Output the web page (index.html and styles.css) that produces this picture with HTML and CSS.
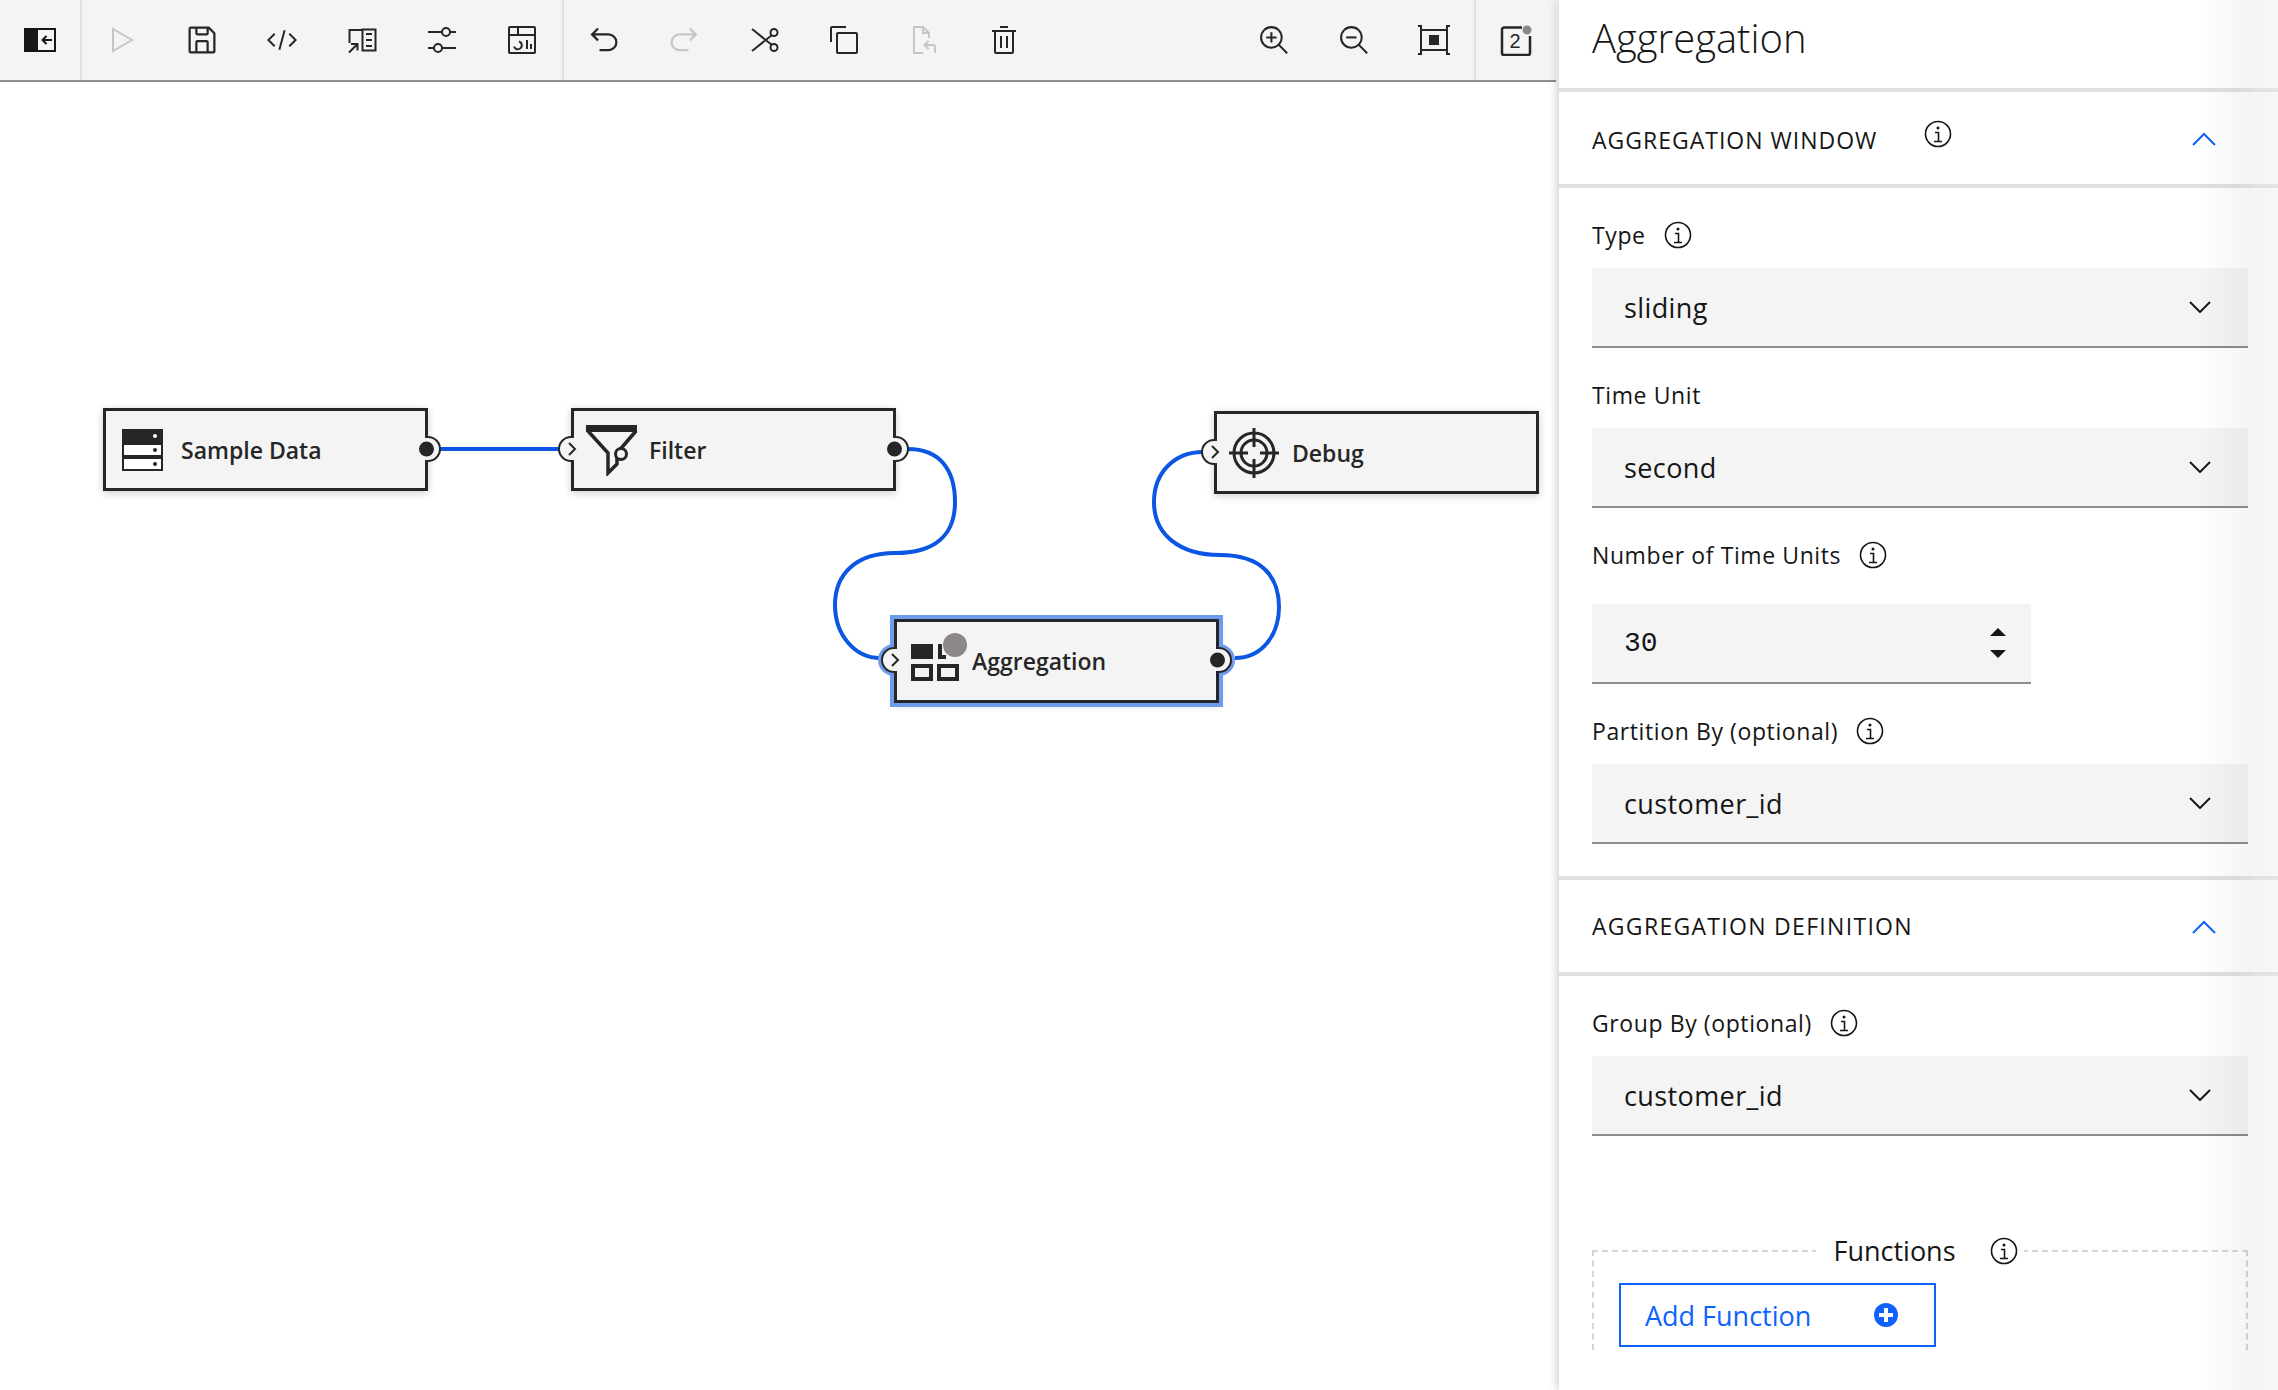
FILE: index.html
```html
<!DOCTYPE html>
<html>
	<head>
		<meta charset="utf-8" />
		<title>Aggregation</title>
		<link rel="stylesheet" href="styles.css">
	</head>

	<body>
		<main class="editor">
			<div class="toolbar">
				<div class="tool-group">
					<button class="tool">
						<svg class="icon-close" viewBox="0 0 32 24"><rect width="14" height="24" fill="#161616"/><rect x="13" y="1" width="18" height="22" fill="none" stroke="#161616" stroke-width="2"/><path d="M28 12h-9M22.500 8l-4 4 4 4" fill="none" stroke="#161616" stroke-width="2"/></svg>
					</button>
				</div>
				<div class="tool-group">
					<button class="tool is-disabled">
						<svg class="icon" viewBox="0 0 32 32"><path d="M7 5v22l19-11z" class="line"/></svg>
					</button>
					<button class="tool">
						<svg class="icon icon-lg" viewBox="0 0 32 32"><path d="M27.710 9.290l-5-5A1 1 0 0 0 22 4H6a2 2 0 0 0-2 2v20a2 2 0 0 0 2 2h20a2 2 0 0 0 2-2V10a1 1 0 0 0-.29-.71zM12 6h8v4h-8zm8 20h-8v-8h8zm2 0v-8a2 2 0 0 0-2-2h-8a2 2 0 0 0-2 2v8H6V6h4v4a2 2 0 0 0 2 2h8a2 2 0 0 0 2-2V6.410l4 4V26z"/></svg>
					</button>
					<button class="tool">
						<svg class="icon" viewBox="0 0 32 32"><path d="M31 16l-7 7-1.410-1.410L28.170 16l-5.580-5.590L24 9l7 7zM1 16l7-7 1.410 1.410L3.830 16l5.580 5.590L8 23l-7-7zM12.419 25.484L17.639 6l1.932.518L14.350 26z"/></svg>
					</button>
					<button class="tool">
						<svg class="icon" viewBox="0 0 32 32"><path class="line" d="M16.500 5.500h13v21h-13zM20 10h6M20 16h6M20 22h6M3.500 19V6H16.500M3 28.500l8-8M5 20h6.500v6.500"/></svg>
					</button>
					<button class="tool">
						<svg class="icon" viewBox="0 0 32 32"><path class="line" d="M2 8h14M24 8h6M2 24h6M16 24h14"/><circle class="line" cx="20" cy="8" r="4"/><circle class="line" cx="12" cy="24" r="4"/></svg>
					</button>
					<button class="tool">
						<svg class="icon" viewBox="0 0 32 32"><rect class="line" x="3" y="3" width="26" height="26" rx="1"/><path class="line" d="M3 11h26M12 3v8M21 16v9M25 20v5M13 17.500a4 4 0 1 1-5 5"/></svg>
					</button>
				</div>
				<div class="tool-group tool-group-plain">
					<button class="tool">
						<svg class="icon icon-lg" viewBox="0 0 32 32"><path d="M20 10H7.815l3.587-3.586L10 5l-6 6 6 6 1.402-1.415L7.818 12H20a6 6 0 0 1 0 12h-8v2h8a8 8 0 0 0 0-16z"/></svg>
					</button>
					<button class="tool is-disabled">
						<svg class="icon icon-lg" viewBox="0 0 32 32"><path transform="matrix(-1 0 0 1 32 0)" d="M20 10H7.815l3.587-3.586L10 5l-6 6 6 6 1.402-1.415L7.818 12H20a6 6 0 0 1 0 12h-8v2h8a8 8 0 0 0 0-16z"/></svg>
					</button>
					<button class="tool">
						<svg class="icon" viewBox="0 0 32 32"><path class="line" d="M4 5l20 16M4 27l20-16"/><circle class="line" cx="26" cy="8.500" r="3.500"/><circle class="line" cx="26" cy="23.500" r="3.500"/></svg>
					</button>
					<button class="tool">
						<svg class="icon" viewBox="0 0 32 32"><path d="M28 10v18H10V10h18m0-2H10a2 2 0 0 0-2 2v18a2 2 0 0 0 2 2h18a2 2 0 0 0 2-2V10a2 2 0 0 0-2-2z"/><path d="M4 18H2V4a2 2 0 0 1 2-2h14v2H4z"/></svg>
					</button>
					<button class="tool is-disabled">
						<svg class="icon" viewBox="0 0 32 32"><path class="line" d="M15 29H6V3h9l6 6v5M15 3v6h6M27 29v-6a2 2 0 0 0-2-2h-8M20.500 17l-4 4 4 4"/></svg>
					</button>
					<button class="tool">
						<svg class="icon" viewBox="0 0 32 32"><path d="M12 12h2v12h-2zM18 12h2v12h-2z"/><path d="M4 6v2h2v20a2 2 0 0 0 2 2h16a2 2 0 0 0 2-2V8h2V6zm4 22V8h16v20zM12 2h8v2h-8z"/></svg>
					</button>
				</div>
				<div class="tool-group tool-group-right">
					<button class="tool">
						<svg class="icon icon-zoom" viewBox="0 0 32 32"><path d="M18 12h-4V8h-2v4H8v2h4v4h2v-4h4v-2z"/><path d="M21.448 20A10.856 10.856 0 0 0 24 13a11 11 0 1 0-11 11 10.856 10.856 0 0 0 7-2.552L27.586 29 29 27.586zM13 22a9 9 0 1 1 9-9 9.010 9.010 0 0 1-9 9z"/></svg>
					</button>
					<button class="tool">
						<svg class="icon icon-zoom" viewBox="0 0 32 32"><path d="M8 12h10v2H8z"/><path d="M21.448 20A10.856 10.856 0 0 0 24 13a11 11 0 1 0-11 11 10.856 10.856 0 0 0 7-2.552L27.586 29 29 27.586zM13 22a9 9 0 1 1 9-9 9.010 9.010 0 0 1-9 9z"/></svg>
					</button>
					<button class="tool">
						<svg class="icon" viewBox="0 0 32 32"><rect class="line" x="3" y="6" width="26" height="20"/><rect x="11" y="11" width="10" height="10"/><path class="line" d="M3 5V2H0M29 5V2h3M3 27v3H0M29 27v3h3" stroke-width="1.500"/></svg>
					</button>
				</div>
				<div class="tool-group tool-group-plain">
					<button class="tool">
						<svg class="icon" viewBox="0 0 32 32"><path class="line line-thick" d="M22 3.500H4a2 2 0 0 0-2 2V29a2 2 0 0 0 2 2h24a2 2 0 0 0 2-2V12"/><text x="15" y="24" class="icon-count">2</text><circle cx="27" cy="6" r="4.500" fill="#8d8888"/></svg>
					</button>
				</div>
			</div>

			<div class="canvas">
				<svg class="wires" viewBox="0 82 1559 1308">
					<path d="M439 449H560"/>
					<path d="M908 449C940 449 955 470 955 502C955 535 935 553 895 553C855 553 835 575 835 605C835 635 855 658 880 658"/>
					<path d="M1235 658C1262 658 1279 635 1279 607C1279 575 1260 555 1220 555C1180 555 1154 535 1154 502C1154 472 1175 452 1203 452"/>
				</svg>

				<div class="node node-sample">
					<div class="node-icon">
						<svg width="41" height="42" viewBox="0 0 41 42"><rect width="41" height="14" fill="#262626"/><rect x="1" y="15" width="39" height="12" fill="#fff" stroke="#262626" stroke-width="2"/><rect x="1" y="29" width="39" height="12" fill="#fff" stroke="#262626" stroke-width="2"/><circle cx="33" cy="7" r="2" fill="#fff"/><circle cx="33" cy="21" r="2" fill="#262626"/><circle cx="33" cy="35" r="2" fill="#262626"/></svg>
					</div>
					<span class="node-label">Sample Data</span>
					<svg class="port port-out" viewBox="0 0 32 32"><rect x="10" y="5" width="6" height="22" fill="#f4f4f4"/><path d="M16 4a12 12 0 0 1 0 24" fill="#f4f4f4" stroke="#262626" stroke-width="2"/><circle cx="14.500" cy="16" r="7.500" fill="#262626"/></svg>
				</div>

				<div class="node node-filter">
					<div class="node-icon">
						<svg width="52" height="52" viewBox="0 0 52 52"><rect y="1" width="51" height="7" fill="#262626"/><path d="M2 7L22 29V49L31 40V29L50 7" fill="none" stroke="#262626" stroke-width="3.500"/><circle cx="35" cy="30" r="5.500" fill="#f4f4f4" stroke="#262626" stroke-width="3"/></svg>
					</div>
					<span class="node-label">Filter</span>
					<svg class="port port-in" viewBox="0 0 32 32"><rect x="16" y="5" width="6" height="22" fill="#f4f4f4"/><path d="M16 4a12 12 0 0 0 0 24" fill="#f4f4f4" stroke="#262626" stroke-width="2"/><path d="M14 10l6 6-6 6" fill="none" stroke="#262626" stroke-width="2"/></svg>
					<svg class="port port-out" viewBox="0 0 32 32"><rect x="10" y="5" width="6" height="22" fill="#f4f4f4"/><path d="M16 4a12 12 0 0 1 0 24" fill="#f4f4f4" stroke="#262626" stroke-width="2"/><circle cx="14.500" cy="16" r="7.500" fill="#262626"/></svg>
				</div>

				<div class="node node-debug">
					<div class="node-icon">
						<svg width="50" height="50" viewBox="0 0 50 50"><g fill="none" stroke="#262626" stroke-width="3"><circle cx="25" cy="25" r="20"/><circle cx="25" cy="25" r="13"/><path d="M0 25H19M31 25H50M25 0V19M25 31V50"/></g></svg>
					</div>
					<span class="node-label">Debug</span>
					<svg class="port port-in" viewBox="0 0 32 32"><rect x="16" y="5" width="6" height="22" fill="#f4f4f4"/><path d="M16 4a12 12 0 0 0 0 24" fill="#f4f4f4" stroke="#262626" stroke-width="2"/><path d="M14 10l6 6-6 6" fill="none" stroke="#262626" stroke-width="2"/></svg>
				</div>

				<div class="node node-aggregation">
					<div class="node-icon">
						<svg class="aggregation-icon" width="60" height="50" viewBox="0 0 60 50"><rect y="11" width="22" height="15" fill="#262626"/><path d="M29 11V24H35" fill="none" stroke="#262626" stroke-width="4"/><rect x="2" y="33" width="18" height="13" fill="none" stroke="#262626" stroke-width="4"/><rect x="28" y="33" width="18" height="13" fill="none" stroke="#262626" stroke-width="4"/><circle cx="44" cy="12" r="12" fill="#8d8888"/></svg>
					</div>
					<span class="node-label">Aggregation</span>
					<svg class="port port-in" viewBox="0 0 32 32"><path d="M16 2a14 14 0 0 0 0 28" fill="none" stroke="#6f9bef" stroke-width="4"/><rect x="16" y="5" width="6" height="22" fill="#f4f4f4"/><path d="M16 4a12 12 0 0 0 0 24" fill="#f4f4f4" stroke="#262626" stroke-width="2"/><path d="M14 10l6 6-6 6" fill="none" stroke="#262626" stroke-width="2"/></svg>
					<svg class="port port-out" viewBox="0 0 32 32"><path d="M16 2a14 14 0 0 1 0 28" fill="none" stroke="#6f9bef" stroke-width="4"/><rect x="10" y="5" width="6" height="22" fill="#f4f4f4"/><path d="M16 4a12 12 0 0 1 0 24" fill="#f4f4f4" stroke="#262626" stroke-width="2"/><circle cx="14.500" cy="16" r="7.500" fill="#262626"/></svg>
				</div>
			</div>
		</main>

		<aside class="panel">
			<h1 class="panel-title">Aggregation</h1>

			<section class="section">
				<header class="section-head">
					<h2 class="section-name">AGGREGATION WINDOW</h2>
					<svg class="info info-raised" viewBox="0 0 28 28"><circle cx="14" cy="14" r="12.500"/><path d="M11 12.500h3.500V21M10 21.500h8"/><circle class="info-dot" cx="14" cy="8" r="1.500"/></svg>
					<svg class="chevron-up" viewBox="0 0 24 14"><path d="M1 13L12 2l11 11"/></svg>
				</header>
				<div class="section-body">
					<div class="field">
						<label class="field-label">Type <svg class="info" viewBox="0 0 28 28"><circle cx="14" cy="14" r="12.500"/><path d="M11 12.500h3.500V21M10 21.500h8"/><circle class="info-dot" cx="14" cy="8" r="1.500"/></svg></label>
						<div class="select">sliding <svg class="chevron-down" viewBox="0 0 22 12"><path d="M1 1l10 10L21 1"/></svg></div>
					</div>
					<div class="field">
						<label class="field-label">Time Unit</label>
						<div class="select">second <svg class="chevron-down" viewBox="0 0 22 12"><path d="M1 1l10 10L21 1"/></svg></div>
					</div>
					<div class="field field-number">
						<label class="field-label">Number of Time Units <svg class="info" viewBox="0 0 28 28"><circle cx="14" cy="14" r="12.500"/><path d="M11 12.500h3.500V21M10 21.500h8"/><circle class="info-dot" cx="14" cy="8" r="1.500"/></svg></label>
						<div class="select number-input"><span class="number-value">30</span><span class="spinner"></span></div>
					</div>
					<div class="field">
						<label class="field-label">Partition By (optional) <svg class="info" viewBox="0 0 28 28"><circle cx="14" cy="14" r="12.500"/><path d="M11 12.500h3.500V21M10 21.500h8"/><circle class="info-dot" cx="14" cy="8" r="1.500"/></svg></label>
						<div class="select">customer_id <svg class="chevron-down" viewBox="0 0 22 12"><path d="M1 1l10 10L21 1"/></svg></div>
					</div>
				</div>
			</section>

			<section class="section">
				<header class="section-head section-head-flat">
					<h2 class="section-name">AGGREGATION DEFINITION</h2>
					<svg class="chevron-up" viewBox="0 0 24 14"><path d="M1 13L12 2l11 11"/></svg>
				</header>
				<div class="section-body">
					<div class="field">
						<label class="field-label">Group By (optional) <svg class="info" viewBox="0 0 28 28"><circle cx="14" cy="14" r="12.500"/><path d="M11 12.500h3.500V21M10 21.500h8"/><circle class="info-dot" cx="14" cy="8" r="1.500"/></svg></label>
						<div class="select">customer_id <svg class="chevron-down" viewBox="0 0 22 12"><path d="M1 1l10 10L21 1"/></svg></div>
					</div>
					<fieldset class="functions">
						<legend class="functions-legend">Functions <svg class="info" viewBox="0 0 28 28"><circle cx="14" cy="14" r="12.500"/><path d="M11 12.500h3.500V21M10 21.500h8"/><circle class="info-dot" cx="14" cy="8" r="1.500"/></svg></legend>
						<button class="add-function">Add Function <svg class="plus" viewBox="0 0 28 28"><circle cx="14" cy="14" r="14"/><path d="M14 7v14M7 14h14"/></svg></button>
					</fieldset>
				</div>
			</section>

			<div class="panel-fade"></div>
		</aside>
	</body>
</html>
```

FILE: styles.css
```css
html, body {
	height: 100%;
}

body {
	margin: 0;
	display: flex;
	overflow: hidden;
	background: #fff;
	color: #161616;
	font-family: "Open Sans", "Noto Sans", sans-serif;
}

/**
 * Left side: toolbar and flow canvas
 */
.editor {
	flex: 0 0 1559px;
	display: flex;
	flex-direction: column;
}

.toolbar {
	display: flex;
	box-sizing: border-box;
	width: 1556px;
	height: 82px;
	background: #f4f4f4;
	border-bottom: 2px solid #8d8d8d;
}

.tool-group {
	display: flex;
	border-right: 2px solid #e0e0e0;
}

.tool-group-right {
	margin-left: auto;
}

.tool-group-plain {
	border-right: none;
}

.tool {
	display: flex;
	align-items: center;
	justify-content: center;
	width: 80px;
	height: 80px;
	padding: 0;
	border: none;
	background: none;
	color: #262626;
}

.tool.is-disabled {
	color: #c6c6c6;
}

.icon {
	width: 32px;
	height: 32px;
	fill: currentColor;
}

.icon-lg {
	width: 36px;
	height: 36px;
}

.icon-zoom {
	width: 33px;
	height: 33px;
}

.icon-close {
	width: 32px;
	height: 24px;
}

.icon .line {
	fill: none;
	stroke: currentColor;
	stroke-width: 2;
}

.icon .line-thick {
	stroke-width: 2.5;
}

.icon-count {
	font-size: 20px;
	text-anchor: middle;
}

/* Nodes sit on a free canvas, so these are placed by coordinate */
.canvas {
	position: relative;
	flex: 1;
}

.wires {
	position: absolute;
	left: 0;
	top: 0;
	width: 1559px;
	height: 1308px;
}

.wires path {
	fill: none;
	stroke: #0b57e3;
	stroke-width: 4;
}

.node {
	position: absolute;
	display: flex;
	align-items: center;
	box-sizing: border-box;
	width: 325px;
	height: 83px;
	background: #f4f4f4;
	border: 3px solid #262626;
	box-shadow: 0 2px 8px rgba(0, 0, 0, 0.2);
}

.node-sample {
	left: 103px;
	top: 326px;
}

.node-filter {
	left: 571px;
	top: 326px;
}

.node-debug {
	left: 1214px;
	top: 329px;
}

.node-aggregation {
	left: 894px;
	top: 537px;
	height: 84px;
	outline: 4px solid #6f9bef;
}

.node-icon {
	flex: 0 0 75px;
	display: flex;
	padding-left: 12px;
	box-sizing: border-box;
}

.node-sample .node-icon {
	padding-left: 16px;
}

.node-aggregation .node-icon {
	padding-left: 14px;
}

.aggregation-icon {
	margin-top: -7px;
}

.node-label {
	font-size: 23px;
	font-weight: 600;
	color: #262626;
}

.port {
	position: absolute;
	top: 22px;
	width: 32px;
	height: 32px;
}

.port-out {
	right: -19px;
}

.port-in {
	left: -19px;
}

/**
 * Right side: properties panel
 */
.panel {
	position: relative;
	flex: 1;
	background: #fff;
	box-shadow: -2px 0 8px rgba(0, 0, 0, 0.2);
}

.panel-title {
	box-sizing: border-box;
	height: 88px;
	margin: 0;
	padding: 8px 0 0 33px;
	font-size: 40px;
	font-weight: 300;
	line-height: 60px;
}

.section-head {
	position: relative;
	display: flex;
	align-items: center;
	box-sizing: border-box;
	height: 100px;
	padding: 4px 0 0 33px;
	border-top: 4px solid #e0e0e0;
	border-bottom: 4px solid #e0e0e0;
	border-image: linear-gradient(to right, #e0e0e0 94%, #ebebeb 97%) 1;
}

.section-name {
	margin: 0;
	font-size: 23px;
	font-weight: 400;
	letter-spacing: 1px;
}

.section-head-flat {
	padding-top: 0;
}

.section-head-flat .section-name {
	letter-spacing: 1.3px;
}

.section-body {
	padding: 0 30px 32px 33px;
}

.info {
	width: 28px;
	height: 28px;
	margin-left: 18px;
	vertical-align: middle;
	fill: none;
	stroke: #161616;
	stroke-width: 1.6;
}

.info .info-dot {
	fill: #161616;
	stroke: none;
}

.info-raised {
	margin: -12px 0 0 47px;
}

.chevron-up {
	position: absolute;
	right: 62px;
	top: 40px;
	width: 24px;
	height: 14px;
	fill: none;
	stroke: #0f62fe;
	stroke-width: 2;
}

.chevron-down {
	width: 22px;
	height: 12px;
	fill: none;
	stroke: #161616;
	stroke-width: 2;
}

.field {
	margin-top: 33px;
}

.field-label {
	display: flex;
	align-items: center;
	height: 28px;
	margin-bottom: 19px;
	font-size: 23px;
	letter-spacing: 0.6px;
}

.field-number .field-label {
	margin-bottom: 35px;
}

.select {
	display: flex;
	align-items: center;
	justify-content: space-between;
	box-sizing: border-box;
	height: 80px;
	padding: 0 37px 0 32px;
	background: #f4f4f4;
	border-bottom: 2px solid #8d8d8d;
	font-size: 27px;
	letter-spacing: 0.4px;
}

.number-input {
	width: 439px;
	padding-right: 23px;
}

.number-value {
	font-family: "Liberation Mono", monospace;
	font-size: 28px;
	letter-spacing: 0;
}

/* Two small triangles, stacked */
.spinner {
	position: relative;
	width: 16px;
	height: 30px;
	margin-right: 2px;
}

.spinner::before,
.spinner::after {
	content: "";
	position: absolute;
	left: 0;
	border-left: 8px solid transparent;
	border-right: 8px solid transparent;
}

.spinner::before {
	top: 0;
	border-bottom: 8px solid #161616;
}

.spinner::after {
	bottom: 0;
	border-top: 8px solid #161616;
}

.functions {
	box-sizing: border-box;
	height: 118px;
	margin: 96px 0 0;
	padding: 14px 0 0;
	border: 2px dashed #d6d6d6;
	border-bottom: none;
}

.functions-legend {
	display: flex;
	align-items: center;
	margin: 0 auto;
	padding: 0 6px 0 17px;
	font-size: 27px;
}

.functions-legend .info {
	margin-left: 34px;
}

.add-function {
	display: flex;
	align-items: center;
	justify-content: space-between;
	box-sizing: border-box;
	width: 317px;
	height: 64px;
	margin-left: 25px;
	padding: 0 34px 0 24px;
	background: #fff;
	border: 2px solid #0f62fe;
	color: #0f62fe;
	font-family: inherit;
	font-size: 27px;
}

.plus {
	width: 28px;
	height: 28px;
	fill: #0f62fe;
	stroke: #fff;
	stroke-width: 4;
}

/* Soft shade down the right edge, over the form */
.panel-fade {
	position: absolute;
	top: 0;
	right: 0;
	bottom: 0;
	width: 81px;
	background: linear-gradient(to right, rgba(0, 0, 0, 0), rgba(0, 0, 0, 0.045) 65%, rgba(0, 0, 0, 0.03));
	pointer-events: none;
}
```
